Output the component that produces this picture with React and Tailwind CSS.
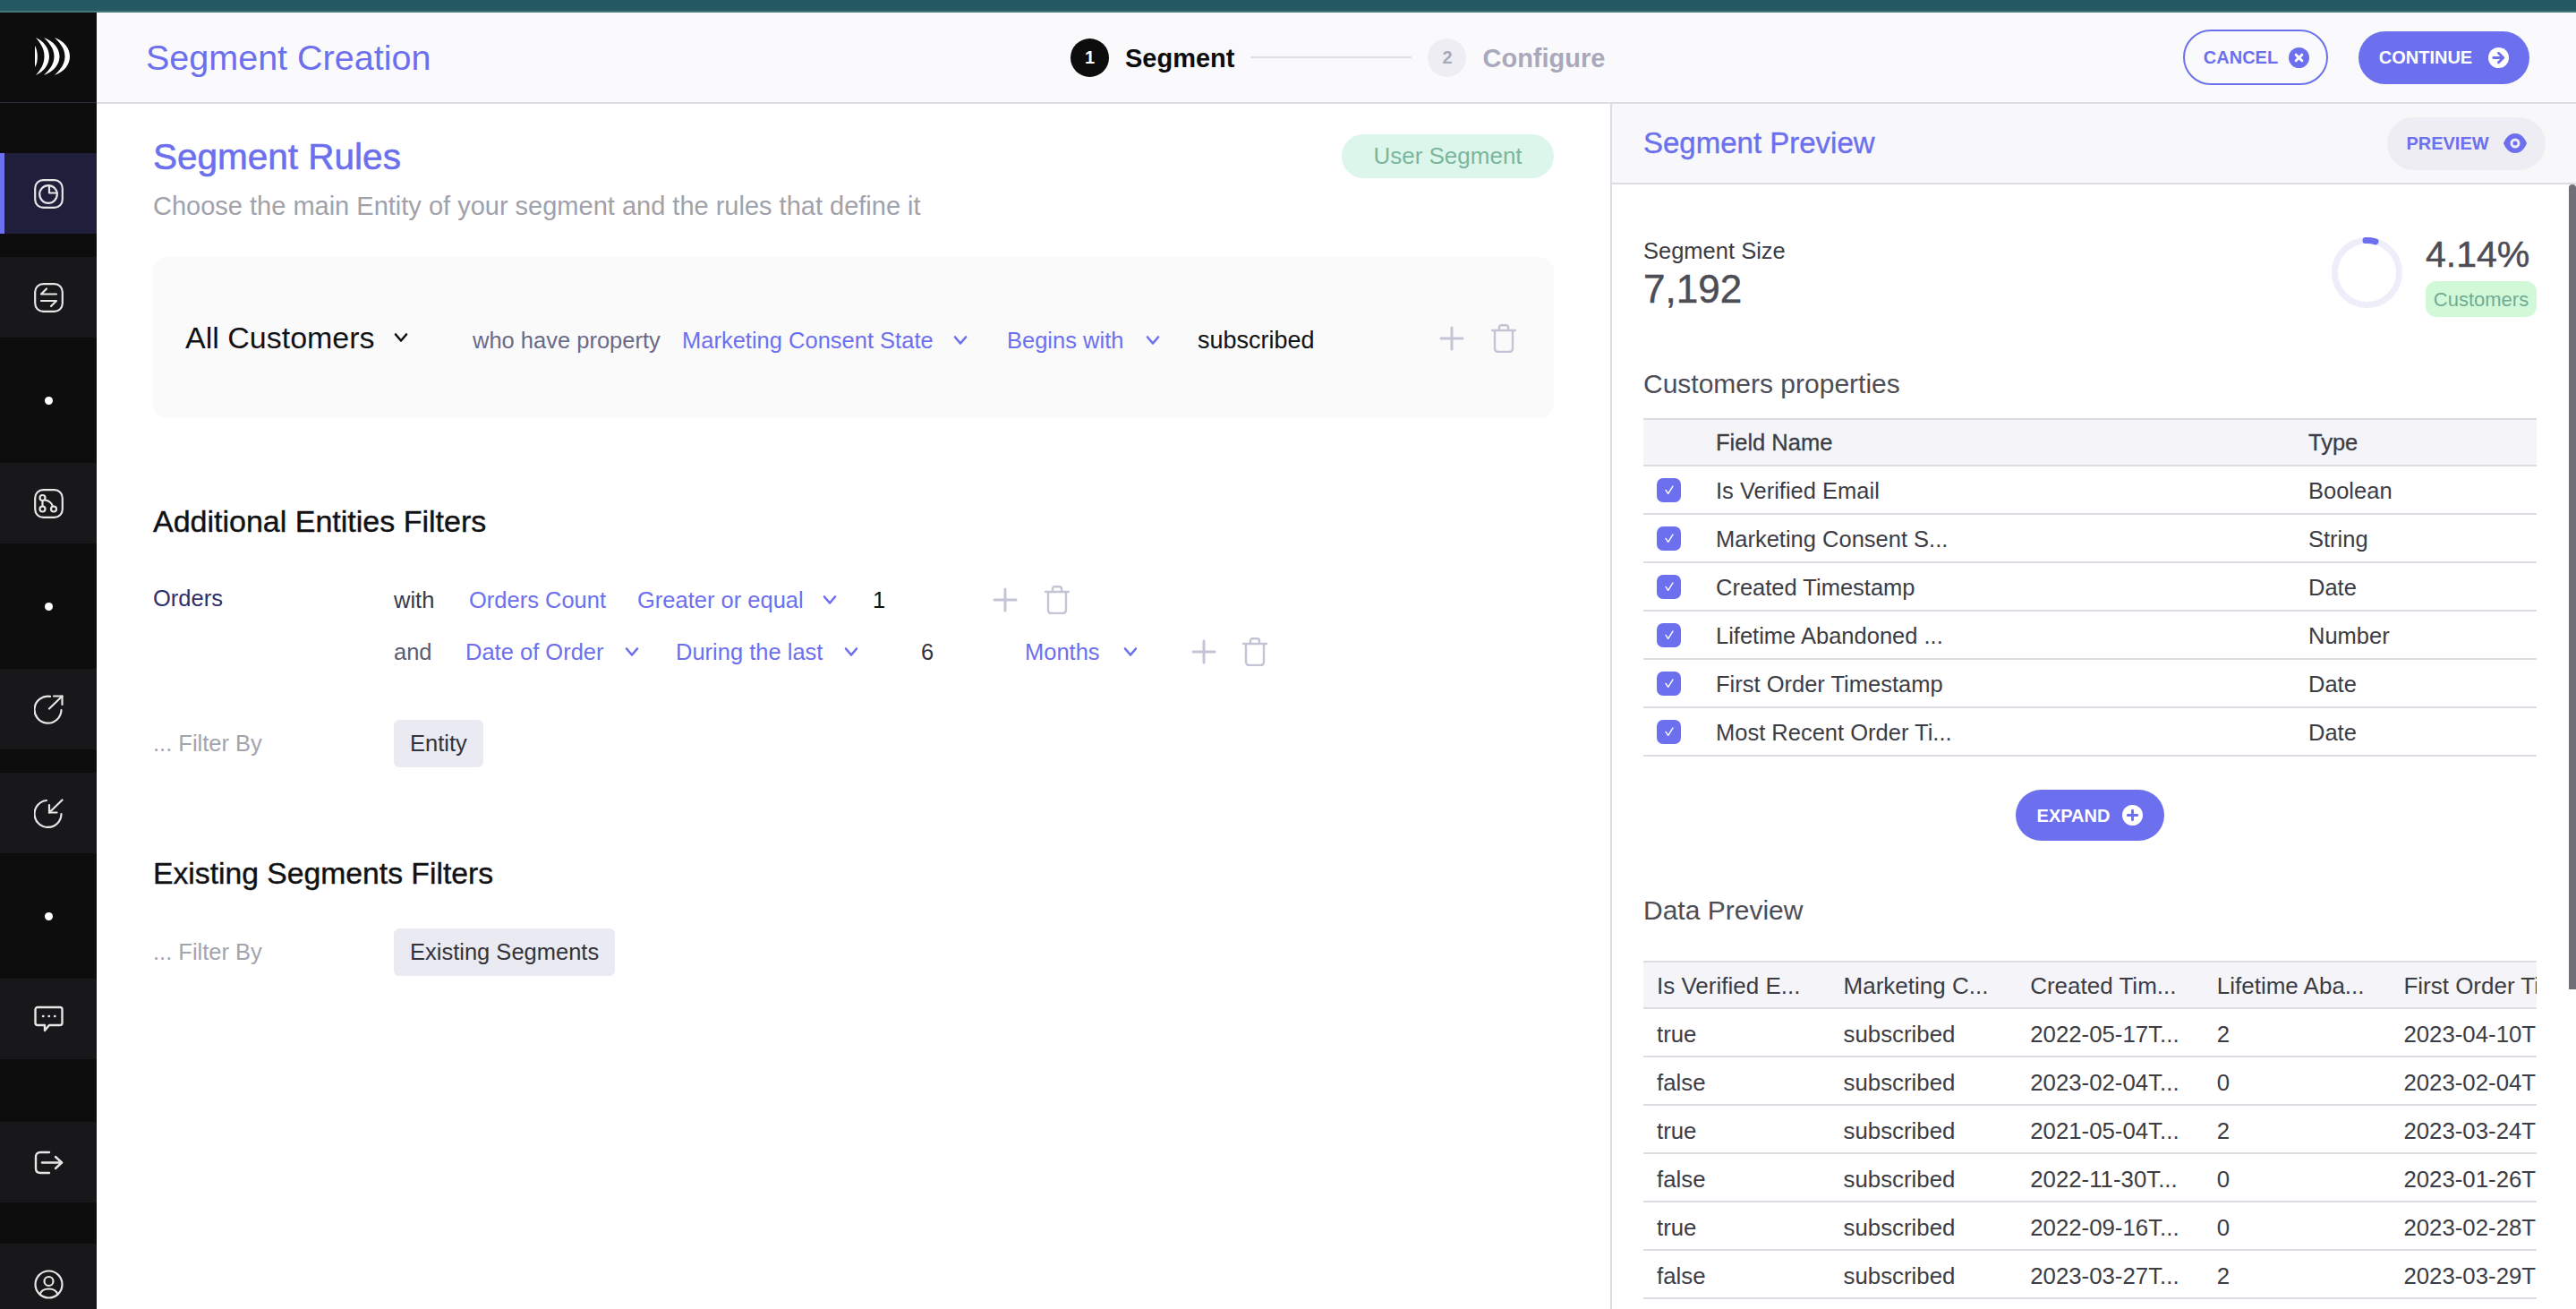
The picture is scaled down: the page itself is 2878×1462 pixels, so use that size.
import React from 'react'

const BLUE = '#6d70ee'

function Chevron({ className = 'text-[#6d70ee]' }) {
  return (
    <svg viewBox="0 0 16 12" className={`h-[12px] w-[16px] shrink-0 ${className}`} fill="none" stroke="currentColor" strokeWidth="2.6" strokeLinecap="round" strokeLinejoin="round">
      <path d="M2 2.500l6 7 6-7" />
    </svg>
  )
}

function PlusIcon() {
  return (
    <svg viewBox="0 0 28 28" className="h-[28px] w-[28px] shrink-0 text-[#c3c5d5]" fill="none" stroke="currentColor" strokeWidth="3" strokeLinecap="round">
      <path d="M14 2v24" />
      <path d="M2 14h24" />
    </svg>
  )
}

function TrashIcon() {
  return (
    <svg viewBox="0 0 28 32" className="h-[32px] w-[28px] shrink-0 text-[#c3c5d5]" fill="none" stroke="currentColor" strokeWidth="2.4" strokeLinecap="round" strokeLinejoin="round">
      <path d="M1 7h26" />
      <path d="M9 7V3.500C9 2 10 1.200 11.500 1.200h5C18 1.200 19 2 19 3.500V7" />
      <path d="M4 7v20c0 2.500 1.500 4 4 4h12c2.500 0 4-1.500 4-4V7" />
    </svg>
  )
}

function Logo() {
  return (
    <svg viewBox="0 0 39 42" className="h-[42px] w-[39px]" fill="#fff">
      <path d="M0 9C3.500 15 4 27 0 33z" />
      <path d="M1 0C10 4 16 12 16 21S10 38 1 42C6 36 10.500 30 10.500 21S6 6 1 0z" />
      <path d="M10 0C21 4 27.500 12 27.500 21S21 38 10 42C16 36 21.500 30 21.500 21S16 6 10 0z" />
      <path d="M22 0C33 4 39 12 39 21S33 38 22 42C28 36 33.500 30 33.500 21S28 6 22 0z" />
    </svg>
  )
}

const navIconClass = 'h-[33px] w-[33px] text-[#e6e6e6]'

function PieNav() {
  return (
    <svg viewBox="0 0 33 33" className={navIconClass} fill="none" stroke="currentColor" strokeWidth="2.2" strokeLinecap="round" strokeLinejoin="round">
      <rect x="1.200" y="1.200" width="30.600" height="30.600" rx="9" />
      <circle cx="16" cy="17" r="9.800" />
      <path d="M17 7.300V15.500H25.700" />
    </svg>
  )
}

function SwapNav() {
  return (
    <svg viewBox="0 0 33 33" className={navIconClass} fill="none" stroke="currentColor" strokeWidth="2.2" strokeLinecap="round" strokeLinejoin="round">
      <rect x="1.200" y="1.200" width="30.600" height="30.600" rx="9" />
      <path d="M25 12.500H8l6-6" />
      <path d="M8 20h17l-6 6" />
    </svg>
  )
}

function FlowNav() {
  return (
    <svg viewBox="0 0 33 33" className={navIconClass} fill="none" stroke="currentColor" strokeWidth="2.2" strokeLinecap="round" strokeLinejoin="round">
      <rect x="1.200" y="1.200" width="30.600" height="30.600" rx="9" />
      <circle cx="9.500" cy="10" r="3" />
      <circle cx="9.500" cy="22.500" r="3" />
      <circle cx="22" cy="22.500" r="3" />
      <path d="M9.500 13v6.500" />
      <path d="M12 12.500c4 .5 7.500 2.500 9 7" />
    </svg>
  )
}

function ArrowOutNav() {
  return (
    <svg viewBox="0 0 33 33" className={navIconClass} fill="none" stroke="currentColor" strokeWidth="2.2" strokeLinecap="round" strokeLinejoin="round">
      <path d="M18 1.900A15 15 0 1 0 30.500 17" />
      <path d="M17 15.500L31.500 1.500" />
      <path d="M22 1.500h9.500V11" />
    </svg>
  )
}

function ArrowInNav() {
  return (
    <svg viewBox="0 0 33 33" className={navIconClass} fill="none" stroke="currentColor" strokeWidth="2.2" strokeLinecap="round" strokeLinejoin="round">
      <path d="M14 2A15 15 0 1 0 30.500 17" />
      <path d="M31.500 1.500L17 15.500" />
      <path d="M17 7v8.500h8.500" />
    </svg>
  )
}

function ChatNav() {
  return (
    <svg viewBox="0 0 33 33" className={navIconClass} fill="none" stroke="currentColor" strokeWidth="2.4" strokeLinecap="round" strokeLinejoin="round">
      <path d="M4 3h25a2.500 2.500 0 0 1 2.500 2.500v15A2.500 2.500 0 0 1 29 23H17l-5 6v-6H4a2.500 2.500 0 0 1-2.500-2.500v-15A2.500 2.500 0 0 1 4 3z" />
      <path d="M10 13h.5" />
      <path d="M16.500 13h.5" />
      <path d="M23 13h.5" />
    </svg>
  )
}

function LogoutNav() {
  return (
    <svg viewBox="0 0 33 33" className={navIconClass} fill="none" stroke="currentColor" strokeWidth="2.4" strokeLinecap="round" strokeLinejoin="round">
      <path d="M17 5H7C4 5 2 7 2 10v13c0 3 2 5 5 5h10" />
      <path d="M9 16.500h22" />
      <path d="M24 10l7 6.500-7 6.500" />
    </svg>
  )
}

function UserNav() {
  return (
    <svg viewBox="0 0 33 33" className={navIconClass} fill="none" stroke="currentColor" strokeWidth="2.2" strokeLinecap="round" strokeLinejoin="round">
      <circle cx="16.500" cy="16.500" r="15" />
      <circle cx="16.500" cy="13" r="5" />
      <path d="M6.500 27.500c1.500-4 5-6 10-6s8.500 2 10 6" />
    </svg>
  )
}

function NavItem({ children, active = false, className = '' }) {
  return (
    <div className={`flex h-[90px] w-full shrink-0 items-center justify-center border-l-[5px] pr-[5px] ${active ? 'border-[#6d70ee] bg-[#1f1f3c]' : 'border-[#18181a] bg-[#18181a]'} ${className}`}>
      {children}
    </div>
  )
}

function NavDot() {
  return (
    <div className="flex h-[140px] w-full shrink-0 items-center justify-center">
      <div className="h-[9px] w-[9px] rounded-full bg-white" />
    </div>
  )
}

function Sidebar() {
  return (
    <aside className="flex h-full w-[108px] shrink-0 flex-col overflow-hidden bg-[#0d0d0d]">
      <div className="flex h-[101px] shrink-0 items-center justify-center border-b border-[#2b2d3c] pb-[2px]">
        <div className="ml-[8px]">
          <Logo />
        </div>
      </div>
      <NavItem active className="mt-[56px]"><PieNav /></NavItem>
      <NavItem className="mt-[26px]"><SwapNav /></NavItem>
      <NavDot />
      <NavItem><FlowNav /></NavItem>
      <NavDot />
      <NavItem><ArrowOutNav /></NavItem>
      <NavItem className="mt-[26px]"><ArrowInNav /></NavItem>
      <NavDot />
      <NavItem><ChatNav /></NavItem>
      <NavItem className="mt-[70px]"><LogoutNav /></NavItem>
      <NavItem className="mt-[46px]"><UserNav /></NavItem>
    </aside>
  )
}

function CircleIcon({ children, className }) {
  return (
    <svg viewBox="0 0 24 24" className={`h-[23px] w-[23px] shrink-0 ${className}`}>
      {children}
    </svg>
  )
}

function TopHeader() {
  return (
    <header className="flex h-[102px] shrink-0 items-center border-b-2 border-[#dcdce2] bg-[#fafafc]">
      <div className="w-[1088px] shrink-0 pl-[55px] text-[39.500px] leading-[48px] text-[#6d70ee]">Segment Creation</div>
      <div className="flex items-center">
        <div className="flex h-[43px] w-[43px] items-center justify-center rounded-full bg-[#0d0d0d] text-[20px] font-bold text-white">1</div>
        <span className="ml-[18px] pt-[2px] text-[29px] leading-[40px] font-bold text-[#0d0d0d]">Segment</span>
        <div className="ml-[18px] h-[2px] w-[180px] bg-[#dfdfe4]" />
        <div className="ml-[18px] flex h-[43px] w-[43px] items-center justify-center rounded-full bg-[#ededf3] text-[20px] font-bold text-[#a9a9bb]">2</div>
        <span className="ml-[18px] pt-[2px] text-[29px] leading-[40px] font-bold text-[#a9a9bb]">Configure</span>
      </div>
      <div className="ml-auto flex items-center pr-[52px]">
        <button type="button" className="flex h-[62px] w-[162px] items-center justify-center gap-[12px] rounded-full border-2 border-[#6d70ee] pl-[2px] text-[20px] font-bold text-[#6d70ee]">
          CANCEL
          <CircleIcon className="text-[#6d70ee]">
            <circle cx="12" cy="12" r="12" fill="currentColor" />
            <path d="M8.500 8.500l7 7M15.500 8.500l-7 7" stroke="#fff" strokeWidth="3" strokeLinecap="round" />
          </CircleIcon>
        </button>
        <button type="button" className="ml-[34px] flex h-[59px] w-[191px] items-center justify-center gap-[18px] rounded-full bg-[#6d70ee] text-[20px] font-bold text-white">
          CONTINUE
          <CircleIcon className="text-white">
            <circle cx="12" cy="12" r="12" fill="currentColor" />
            <path d="M6 12h11M12 6.500l5.500 5.500-5.500 5.500" fill="none" stroke="#6d70ee" strokeWidth="3" strokeLinecap="round" strokeLinejoin="round" />
          </CircleIcon>
        </button>
      </div>
    </header>
  )
}

function SegmentRules() {
  return (
    <section className="min-w-0 flex-1 pt-[34px] pr-[63px] pl-[63px]">
      <div className="flex h-[49px] items-center justify-between">
        <h1 className="text-[40.500px] leading-[48px] text-[#6d70ee] [-webkit-text-stroke:0.6px_#6d70ee]">Segment Rules</h1>
        <span className="flex h-[49px] w-[237px] items-center justify-center rounded-full bg-[#dcf6ec] text-[26px] text-[#79b69c]">User Segment</span>
      </div>
      <p className="mt-[13px] text-[29px] leading-[36px] text-[#a1a1aa]">Choose the main Entity of your segment and the rules that define it</p>

      <div className="mt-[39px] flex h-[180px] items-center rounded-[16px] bg-[#fafafb] pr-[42px] pl-[36px]">
        <span className="w-[233px] shrink-0 text-[34px] leading-[40px] text-[#111114]">All Customers</span>
        <Chevron className="text-[#111114]" />
        <div className="flex flex-1 items-center pt-[6px] pl-[72px] text-[25.500px] leading-[36px]">
          <span className="w-[234px] shrink-0 text-[#6a6a85]">who have property</span>
          <span className="w-[303px] shrink-0 text-[#6d70ee]">Marketing Consent State</span>
          <Chevron />
          <span className="ml-[44px] w-[155px] shrink-0 text-[#6d70ee]">Begins with</span>
          <Chevron />
          <span className="ml-[42px] text-[27px] text-[#111114]">subscribed</span>
        </div>
        <div className="flex items-center gap-[30px] pt-[2px]">
          <PlusIcon />
          <TrashIcon />
        </div>
      </div>

      <h2 className="mt-[95px] text-[34px] leading-[40px] text-[#111114] [-webkit-text-stroke:0.4px_#111114]">Additional Entities Filters</h2>
      <div className="mt-[39px] flex items-start">
        <span className="h-[54px] w-[269px] shrink-0 text-[25.500px] leading-[54px] text-[#2f2f6b]">Orders</span>
        <div className="flex flex-col text-[25.500px] leading-[36px]">
          <div className="flex h-[58px] items-center">
            <span className="w-[84px] shrink-0 text-[#3a3a44]">with</span>
            <span className="w-[188px] shrink-0 text-[#6d70ee]">Orders Count</span>
            <span className="w-[207px] shrink-0 text-[#6d70ee]">Greater or equal</span>
            <Chevron />
            <span className="ml-[40px] w-[134px] shrink-0 text-[#111114]">1</span>
            <PlusIcon />
            <span className="ml-[30px]"><TrashIcon /></span>
          </div>
          <div className="flex h-[58px] items-center">
            <span className="w-[80px] shrink-0 text-[#5c5c70]">and</span>
            <span className="w-[178px] shrink-0 text-[#6d70ee]">Date of Order</span>
            <Chevron />
            <span className="ml-[41px] w-[188px] shrink-0 text-[#6d70ee]">During the last</span>
            <Chevron />
            <span className="ml-[70px] w-[116px] shrink-0 text-[#33333a]">6</span>
            <span className="w-[110px] shrink-0 text-[#6d70ee]">Months</span>
            <Chevron />
            <span className="ml-[60px]"><PlusIcon /></span>
            <span className="ml-[29px]"><TrashIcon /></span>
          </div>
        </div>
      </div>
      <div className="mt-[47px] flex items-center">
        <span className="w-[269px] shrink-0 text-[25.500px] text-[#a4a4ae]">... Filter By</span>
        <span className="flex h-[53px] items-center rounded-[6px] bg-[#eaeaf3] px-[18px] text-[25.500px] text-[#33333a]">Entity</span>
      </div>

      <h2 className="mt-[98px] text-[33.700px] leading-[40px] text-[#111114] [-webkit-text-stroke:0.4px_#111114]">Existing Segments Filters</h2>
      <div className="mt-[42px] flex items-center">
        <span className="w-[269px] shrink-0 text-[25.500px] text-[#a4a4ae]">... Filter By</span>
        <span className="flex h-[53px] items-center rounded-[6px] bg-[#eaeaf3] px-[18px] text-[25.500px] text-[#33333a]">Existing Segments</span>
      </div>
    </section>
  )
}

const properties = [
  ['Is Verified Email', 'Boolean'],
  ['Marketing Consent S...', 'String'],
  ['Created Timestamp', 'Date'],
  ['Lifetime Abandoned ...', 'Number'],
  ['First Order Timestamp', 'Date'],
  ['Most Recent Order Ti...', 'Date'],
]

const previewColumns = ['Is Verified E...', 'Marketing C...', 'Created Tim...', 'Lifetime Aba...', 'First Order Ti']

const previewRows = [
  ['true', 'subscribed', '2022-05-17T...', '2', '2023-04-10T'],
  ['false', 'subscribed', '2023-02-04T...', '0', '2023-02-04T'],
  ['true', 'subscribed', '2021-05-04T...', '2', '2023-03-24T'],
  ['false', 'subscribed', '2022-11-30T...', '0', '2023-01-26T'],
  ['true', 'subscribed', '2022-09-16T...', '0', '2023-02-28T'],
  ['false', 'subscribed', '2023-03-27T...', '2', '2023-03-29T'],
]

function PropertiesTable() {
  return (
    <div className="text-[25.500px] text-[#3c3c44]">
      <div className="flex h-[54px] items-center border-y-2 border-[#dcdce2] bg-[#f4f4f9] pt-[1px] [-webkit-text-stroke:0.3px_#3c3c44]">
        <span className="w-[81px] shrink-0" />
        <span className="w-[662px] shrink-0">Field Name</span>
        <span>Type</span>
      </div>
      {properties.map(([name, type]) => (
        <div key={name} className="flex h-[54px] items-center border-b-2 border-[#dcdce2]">
          <span className="w-[81px] shrink-0 pl-[15px]">
            <span className="flex h-[27px] w-[27px] items-center justify-center rounded-[7px] bg-[#6d70ee]">
              <svg viewBox="0 0 16 16" className="h-[14px] w-[14px]" fill="none" stroke="#fff" strokeWidth="1.600" strokeLinecap="round" strokeLinejoin="round">
                <path d="M3.500 8.500l3 4.500 6-9.500" />
              </svg>
            </span>
          </span>
          <span className="w-[662px] shrink-0 pt-[3px]">{name}</span>
          <span className="pt-[3px]">{type}</span>
        </div>
      ))}
    </div>
  )
}

function DataTable() {
  return (
    <div className="overflow-hidden text-[#3c3c44]">
      <div className="flex h-[54px] items-center border-y-2 border-[#dcdce2] bg-[#f4f4f9] pt-[3px] text-[26px]">
        {previewColumns.map((column) => (
          <span key={column} className="w-[208.600px] shrink-0 pl-[15px] whitespace-nowrap">{column}</span>
        ))}
      </div>
      {previewRows.map((row) => (
        <div key={row[2]} className="flex h-[54px] items-center border-b-2 border-[#dcdce2] pt-[5px] text-[25.800px]">
          {row.map((cell, i) => (
            <span key={i} className="w-[208.600px] shrink-0 pl-[15px] whitespace-nowrap">{cell}</span>
          ))}
        </div>
      ))}
    </div>
  )
}

function SegmentPreview() {
  return (
    <section className="flex w-[1079px] shrink-0 flex-col overflow-hidden border-l-2 border-[#dcdce2]">
      <div className="flex h-[90px] shrink-0 items-center justify-between border-b-2 border-[#dcdce2] bg-[#f8f8fa] pr-[34px] pl-[35px]">
        <h2 className="text-[33px] leading-[40px] text-[#6d70ee] [-webkit-text-stroke:0.4px_#6d70ee]">Segment Preview</h2>
        <button type="button" className="flex h-[59px] w-[177px] items-center justify-center gap-[16px] rounded-full bg-[#ededf3] text-[20px] font-bold text-[#6d70ee]">
          PREVIEW
          <svg viewBox="0 0 26 22" className="h-[22px] w-[26px]">
            <path d="M13 0C7 0 2.500 4.500 0 11c2.500 6.500 7 11 13 11s10.500-4.500 13-11C23.500 4.500 19 0 13 0z" fill="#6d70ee" />
            <circle cx="13" cy="11" r="4" fill="none" stroke="#ededf3" strokeWidth="3" />
          </svg>
        </button>
      </div>
      <div className="flex min-h-0 flex-1">
        <div className="min-w-0 flex-1 overflow-hidden pr-[36px] pl-[35px]">
          <div className="mt-[56px] flex h-[93px] items-start">
            <div>
              <div className="text-[25.500px] leading-[36px] text-[#3c3c44]">Segment Size</div>
              <div className="mt-[1px] text-[44px] leading-[48px] text-[#4d4d55] [-webkit-text-stroke:0.5px_#4d4d55]">7,192</div>
            </div>
            <svg viewBox="0 0 79 79" className="mt-[3px] ml-auto h-[79px] w-[79px]" fill="none" strokeWidth="7">
              <circle cx="39.500" cy="39.500" r="36" stroke="#eeeefa" />
              <path d="M38 3.600a36 36 0 0 1 11 1.300" stroke={BLUE} strokeLinecap="round" />
            </svg>
            <div className="ml-[26px] flex w-[124px] flex-col">
              <span className="text-[41px] leading-[44px] text-[#4d4d55] [-webkit-text-stroke:0.5px_#4d4d55]">4.14%</span>
              <span className="mt-[8px] flex h-[40px] items-center justify-center rounded-[12px] bg-[#d1f9d8] text-[22px] text-[#72ac94]">Customers</span>
            </div>
          </div>
          <h3 className="mt-[56px] text-[30px] leading-[36px] text-[#4d4d55]">Customers properties</h3>
          <div className="mt-[20px]"><PropertiesTable /></div>
          <button type="button" className="mx-auto mt-[37px] flex h-[57px] w-[166px] items-center justify-center gap-[14px] rounded-full bg-[#6d70ee] text-[20px] font-bold text-white">
            EXPAND
            <CircleIcon className="text-white">
              <circle cx="12" cy="12" r="12" fill="currentColor" />
              <path d="M12 6.500v11M6.500 12h11" stroke="#6d70ee" strokeWidth="3" strokeLinecap="round" />
            </CircleIcon>
          </button>
          <h3 className="mt-[60px] text-[30px] leading-[36px] text-[#4d4d55]">Data Preview</h3>
          <div className="mt-[38px]"><DataTable /></div>
        </div>
        <div className="h-[899px] w-[8px] shrink-0 rounded-t-[5px] bg-[#6f6f78]" />
      </div>
    </section>
  )
}

export default function App() {
  return (
    <div className="flex h-[1462px] w-[2878px] flex-col overflow-hidden bg-white font-['Liberation_Sans',Arial,sans-serif]">
      <div className="h-[14px] shrink-0 border-b-2 border-[#44767c] bg-[#265a62]" />
      <div className="flex min-h-0 flex-1">
        <Sidebar />
        <main className="flex min-w-0 flex-1 flex-col">
          <TopHeader />
          <div className="flex min-h-0 flex-1">
            <SegmentRules />
            <SegmentPreview />
          </div>
        </main>
      </div>
    </div>
  )
}
